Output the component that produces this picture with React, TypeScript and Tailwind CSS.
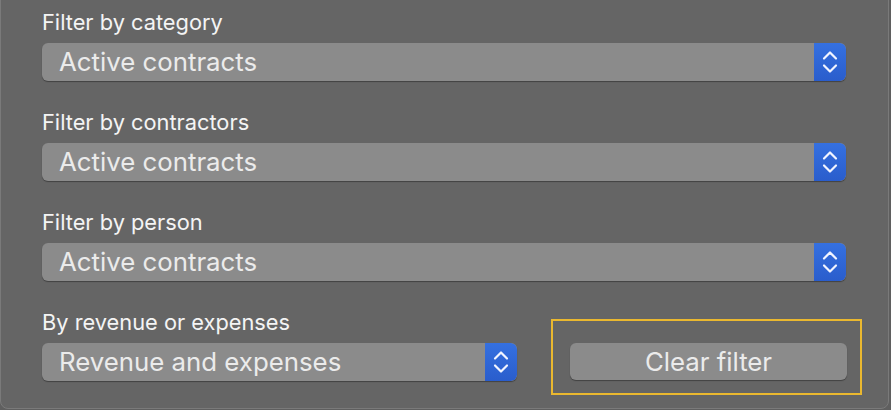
import React from "react"

const font = { fontFamily: "Inter, 'Noto Sans', sans-serif" }

// macOS-style up/down stepper glyph
function Stepper() {
  return (
    <div className="flex h-full w-[32px] items-center justify-center rounded-r-[6px] bg-gradient-to-b from-[#3570e0] to-[#2a5dcc]">
      <svg width="16" height="26" viewBox="0 0 16 26" fill="none">
        <path d="M2 9.5 L8 3.5 L14 9.5" stroke="#f2f5ff" strokeWidth="2.2" strokeLinecap="round" strokeLinejoin="round" />
        <path d="M2 16.5 L8 22.5 L14 16.5" stroke="#f2f5ff" strokeWidth="2.2" strokeLinecap="round" strokeLinejoin="round" />
      </svg>
    </div>
  )
}

function Select({ value, className = "" }: { value: string; className?: string }) {
  return (
    <div
      className={`flex h-[38px] items-stretch overflow-hidden rounded-[6px] bg-[#8b8b8b] shadow-[0_1px_1px_rgba(0,0,0,0.35)] ${className}`}
    >
      <div className="flex flex-1 items-center pl-[17px] pt-[1px] text-[25.8px] text-[#ebebeb]">{value}</div>
      <Stepper />
    </div>
  )
}

function Label({ children }: { children: React.ReactNode }) {
  return <div className="h-[42px] pt-[8px] text-[21.8px] leading-[26px] text-[#f4f4f4]">{children}</div>
}

function Field({ label, value }: { label: string; value: string }) {
  return (
    <div className="flex flex-col">
      <Label>{label}</Label>
      <Select value={value} />
    </div>
  )
}

export default function App() {
  return (
    <div className="h-[410px] w-[891px] overflow-hidden bg-[#5f5f5f]" style={font}>
      <div className="mt-[-12px] h-[421px] w-[889px] rounded-[8px] border border-[#7a7a7a] bg-[#656565] pl-[41px] pr-[42px] pt-[12px]">
        <div className="flex flex-col gap-[20px]">
          <Field label="Filter by category" value="Active contracts" />
          <Field label="Filter by contractors" value="Active contracts" />
          <Field label="Filter by person" value="Active contracts" />
          <div className="flex items-end">
            <div className="flex w-[475px] shrink-0 flex-col">
              <Label>By revenue or expenses</Label>
              <Select value="Revenue and expenses" />
            </div>
            <div className="mb-[-14px] ml-[34px] flex h-[76px] w-[311px] shrink-0 items-start border-2 border-[#eab82f] pl-[17px] pr-[13px] pt-[22px]">
              <div className="flex h-[37px] flex-1 items-center justify-center rounded-[6px] bg-[#8b8b8b] pt-[1px] text-[25.8px] text-[#ebebeb] shadow-[0_1px_1px_rgba(0,0,0,0.35)]">
                Clear filter
              </div>
            </div>
          </div>
        </div>
      </div>
    </div>
  )
}
